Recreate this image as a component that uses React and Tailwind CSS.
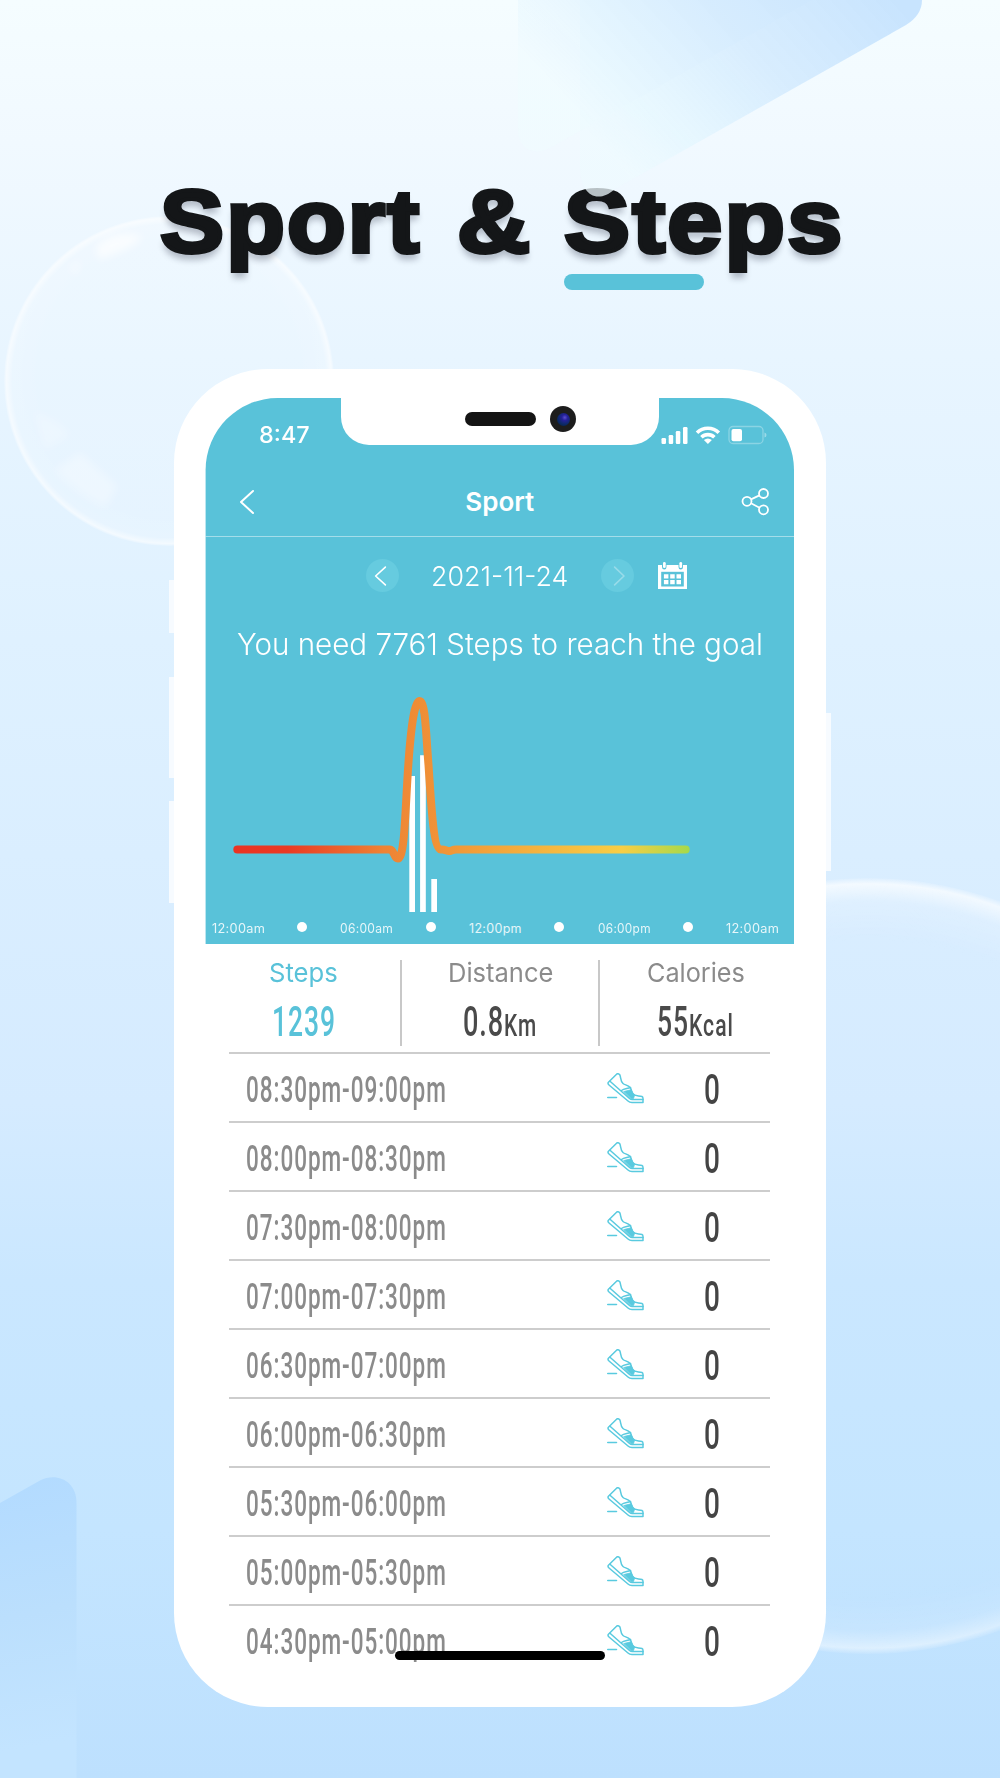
import { useLayoutEffect, useRef } from "react";

const SLOTS = [
  "08:30pm-09:00pm",
  "08:00pm-08:30pm",
  "07:30pm-08:00pm",
  "07:00pm-07:30pm",
  "06:30pm-07:00pm",
  "06:00pm-06:30pm",
  "05:30pm-06:00pm",
  "05:00pm-05:30pm",
  "04:30pm-05:00pm",
];

const AXIS = ["12:00am", null, "06:00am", null, "12:00pm", null, "06:00pm", null, "12:00am"];

// Condenses or widens a run of text so that it fills exactly `w` pixels.
function Fit({ w, className = "", children }) {
  const ref = useRef(null);
  useLayoutEffect(() => {
    const el = ref.current;
    const apply = () => {
      el.style.transform = `scaleX(${w / el.offsetWidth})`;
    };
    apply();
    document.fonts?.ready.then(apply);
  }, [w]);
  return (
    <span className="inline-block shrink-0 text-left" style={{ width: w }}>
      <span ref={ref} className={`inline-block origin-left whitespace-nowrap ${className}`}>
        {children}
      </span>
    </span>
  );
}

function Backdrop() {
  return (
    <svg className="absolute inset-0" width="1000" height="1778" viewBox="0 0 1000 1778" fill="none">
      <defs>
        <linearGradient id="corner" x1="20" y1="1480" x2="70" y2="1740" gradientUnits="userSpaceOnUse">
          <stop stopColor="#b3dbff" />
          <stop offset="0.5" stopColor="#bbdffd" />
          <stop offset="1" stopColor="#c3e4ff" />
        </linearGradient>
        <radialGradient id="bubble">
          <stop offset="0.8" stopColor="#fff" stopOpacity="0.1" />
          <stop offset="0.95" stopColor="#fff" stopOpacity="0.18" />
          <stop offset="0.985" stopColor="#fff" stopOpacity="0.6" />
          <stop offset="1" stopColor="#fff" stopOpacity="0.15" />
        </radialGradient>
        <radialGradient id="orb">
          <stop offset="0.84" stopColor="#fff" stopOpacity="0" />
          <stop offset="0.94" stopColor="#fff" stopOpacity="0.18" />
          <stop offset="0.985" stopColor="#fff" stopOpacity="0.7" />
          <stop offset="1" stopColor="#fff" stopOpacity="0.1" />
        </radialGradient>
        <linearGradient id="orbFade" x1="0" y1="879" x2="0" y2="1654" gradientUnits="userSpaceOnUse">
          <stop stopColor="#fff" />
          <stop offset="0.35" stopColor="#fff" stopOpacity="0.15" />
          <stop offset="0.85" stopColor="#fff" stopOpacity="0.1" />
          <stop offset="1" stopColor="#fff" stopOpacity="0.7" />
        </linearGradient>
        <mask id="orbMask">
          <rect x="400" y="800" width="700" height="900" fill="url(#orbFade)" />
        </mask>
        <filter id="soft" x="-50%" y="-50%" width="200%" height="200%">
          <feGaussianBlur stdDeviation="4" />
        </filter>
      </defs>
      <circle cx="169" cy="381" r="165" fill="url(#bubble)" />
      <g fill="#fff" filter="url(#soft)">
        <path d="M96 246 Q116 228 142 236 Q140 246 98 260Z" opacity="0.65" />
        <path d="M68 268 L80 258 L78 276Z" opacity="0.4" />
        <path d="M54 470 L80 452 Q100 470 118 486 L106 508 Q76 494 54 470Z" opacity="0.3" />
        <path d="M34 410 L62 425 L70 436 L44 450Z" opacity="0.22" />
      </g>
      <circle cx="868" cy="1266" r="388" fill="url(#orb)" mask="url(#orbMask)" />
      <path d="M0 1503 L40 1480.500 C56 1472 76.500 1480 76.500 1503 V1778 H0Z" fill="url(#corner)" />
    </svg>
  );
}

function Ribbons() {
  return (
    <svg className="absolute top-0 left-[500px]" width="440" height="210" viewBox="500 0 440 210" fill="none">
      <defs>
        <linearGradient id="ribA" x1="880" y1="-20" x2="640" y2="190" gradientUnits="userSpaceOnUse">
          <stop stopColor="#c8e4fe" />
          <stop offset="0.45" stopColor="#d6ecfe" stopOpacity="0.95" />
          <stop offset="0.85" stopColor="#e8f8ff" stopOpacity="0.85" />
          <stop offset="1" stopColor="#eefaff" stopOpacity="0.75" />
        </linearGradient>
        <linearGradient id="ribB" x1="760" y1="-60" x2="580" y2="110" gradientUnits="userSpaceOnUse">
          <stop stopColor="#cae3fe" />
          <stop offset="1" stopColor="#effbff" stopOpacity="0.7" />
        </linearGradient>
      </defs>
      <path d="M518 0 V128 C518 150 534 156 550 148 L812 0Z" fill="url(#ribB)" />
      <path d="M580 0 V166 C580 195 597 205 615 189 L906 25 Q922 15 922 0Z" fill="url(#ribA)" />
    </svg>
  );
}

function Chevron({ flip = false, className = "" }) {
  return (
    <svg className={className} width="16" height="26" viewBox="0 0 16 26" fill="none" stroke="currentColor" strokeWidth="2" strokeLinecap="round" strokeLinejoin="round">
      <path d={flip ? "M2 2 L13.500 13 L2 24" : "M14 2 L2 13 L14 24"} />
    </svg>
  );
}

function StatusIcons() {
  return (
    <svg width="106" height="20" viewBox="661 425 106 20" fill="#fff">
      <rect x="661.500" y="438" width="4.500" height="6" rx="1.200" />
      <rect x="668.700" y="435" width="4.500" height="9" rx="1.200" />
      <rect x="675.800" y="431" width="4.500" height="13" rx="1.200" />
      <rect x="683" y="427" width="4.500" height="17" rx="1.200" />
      <g fill="none" stroke="#fff" strokeWidth="3.600">
        <path d="M697 432.800 A15.500 15.500 0 0 1 718.800 432.800" />
        <path d="M701.400 437.300 A9.300 9.300 0 0 1 714.400 437.300" />
      </g>
      <path d="M707.900 444 L703.900 440 Q707.900 437 711.900 440Z" />
      <rect x="729" y="426.500" width="34" height="17" rx="4" fill="none" stroke="#fff" strokeOpacity="0.3" strokeWidth="1.300" />
      <rect x="731.500" y="429" width="10.500" height="12.200" rx="2" />
      <path d="M764.500 432.500 Q766.500 433 766.500 435 Q766.500 437 764.500 437.500Z" fillOpacity="0.4" />
    </svg>
  );
}

function ShareIcon() {
  return (
    <svg width="28" height="28" viewBox="741 487.500 28 28" fill="none" stroke="#fff" strokeWidth="1.800">
      <circle cx="747" cy="500.800" r="4.500" />
      <circle cx="763.500" cy="493" r="4.500" />
      <circle cx="763.500" cy="509.300" r="4.500" />
      <path d="M751 498.900 L759.400 494.900 M751 502.800 L759.500 507.200" />
    </svg>
  );
}

function CalendarIcon() {
  return (
    <svg width="29" height="27" viewBox="0 0 29 27">
      <path d="M0 3 H4 V5 Q4 7.500 6.300 7.500 Q8.500 7.500 8.500 5 V3 H20.500 V5 Q20.500 7.500 22.700 7.500 Q25 7.500 25 5 V3 H29 V27 H0Z" fill="#fff" />
      <rect x="5" y="0" width="2.700" height="6" rx="1.300" fill="#fff" />
      <rect x="21.400" y="0" width="2.700" height="6" rx="1.300" fill="#fff" />
      <rect x="3.200" y="9.800" width="22.600" height="14.700" fill="#59c2d9" />
      <path d="M5.900 12.200h4.500v4.300h-4.500z M12.200 12.200h4.500v4.300h-4.500z M18.500 12.200h4.500v4.300h-4.500z M5.900 18h4.500v4.300h-4.500z M12.200 18h4.500v4.300h-4.500z M18.500 18h4.500v4.300h-4.500z" fill="#fff" />
    </svg>
  );
}

function ShoeIcon() {
  return (
    <svg width="37" height="31" viewBox="0 0 37 31" fill="none" stroke="#59cadf" strokeWidth="1.500" strokeLinejoin="round" strokeLinecap="round">
      <path d="M1.200 9.500 L9.800 1 Q11.500 0.200 12.800 1.800 C14 4 13.200 8 16 10.500 C18 12.300 20.500 11.500 23.500 14.800 L25.500 20.500 C28 23.500 31 22.500 35 23.500 Q36.200 24 36 26.500 V29.500 H25 Q22.500 29.500 21 28 L2 12 Q0.600 10.800 1.200 9.500Z" />
      <path d="M3 8.200 L22.500 25.500 Q24 26.800 26 26.500 H36" />
      <path d="M14.500 17.500 C17 15.500 20 15.800 23.500 14.500" />
      <path d="M17 18.500 L24 16.800 L27.500 22.500 L26.500 25.500 L24 25.500Z" fill="#59cadf" strokeWidth="0.800" />
      <path d="M0.700 24.500 H9.500" />
    </svg>
  );
}

function PulseChart() {
  return (
    <svg className="block" width="588" height="240" viewBox="205 673 588 240" fill="none">
      <defs>
        <linearGradient id="pulse" x1="233" y1="0" x2="690" y2="0" gradientUnits="userSpaceOnUse">
          <stop stopColor="#ea3323" />
          <stop offset="0.12" stopColor="#ea3a24" />
          <stop offset="0.33" stopColor="#ee8334" />
          <stop offset="0.45" stopColor="#f09337" />
          <stop offset="0.85" stopColor="#f8ce46" />
          <stop offset="1" stopColor="#a5d94b" />
        </linearGradient>
      </defs>
      <path d="M409.300 776 h5.700 V912 h-5.700z M420.100 755.300 h5.700 V912 h-5.700z M431.300 879 h5.700 V912 h-5.700z" fill="#fff" />
      <path
        d="M237.300 849.600 H390 C394 849.600 394 858.500 397.800 858.500 C406 858.500 405 795 410 744 C412 722 415 701 419.500 701 C425.500 701 426 735 428.500 765 C431 800 433 849 441 849.600 C445 849 446 851 449.500 851 C452 851 452 849.600 456 849.600 H685.700"
        stroke="url(#pulse)"
        strokeWidth="8"
        strokeLinecap="round"
        strokeLinejoin="round"
      />
    </svg>
  );
}

export default function App() {
  return (
    <div className="relative flex h-[1778px] w-[1000px] flex-col overflow-hidden bg-[linear-gradient(180deg,#f5fdff_0%,#f1f9ff_8%,#e8f5ff_20%,#dff1ff_36%,#daeeff_48%,#d5ebff_62%,#cae7ff_72%,#c4e5ff_86%,#bde0fe_100%)] font-['Inter',sans-serif]">
      <Backdrop />

      <header className="relative h-[369px] shrink-0">
        <h1 className="flex pt-[177px] pl-[160px] font-['Liberation_Sans',sans-serif] text-[89px] leading-[89px] font-bold text-[#141618] [-webkit-text-stroke:4px_#141618] [text-shadow:0_7px_6px_rgba(20,30,50,0.28)]">
          <Fit w={261} className="tracking-[2px]">Sport</Fit>
          <span className="w-[36px]" />
          <Fit w={73}>&amp;</Fit>
          <span className="w-[33.5px]" />
          <Fit w={280} className="tracking-[2px]">Steps</Fit>
        </h1>
        <div className="mt-[8px] ml-[563.5px] h-4 w-[140px] rounded-full bg-[#59c2d9]" />
        <Ribbons />
      </header>

      <main className="relative ml-[174px] h-[1338px] w-[652px] rounded-[94px] bg-white pt-[29px] pr-[32px] pl-[31px]">
        <div className="absolute top-[211px] -left-[5px] h-[53px] w-[5px] bg-[#f7fbff]" />
        <div className="absolute top-[308px] -left-[5px] h-[101px] w-[5px] bg-[#f7fbff]" />
        <div className="absolute top-[432px] -left-[5px] h-[102px] w-[5px] bg-[#f7fbff]" />
        <div className="absolute top-[344px] -right-[4.5px] h-[158px] w-[4.5px] bg-[#f7fbff]" />

        <section className="relative h-[546px] bg-[#59c2d9] text-white [clip-path:inset(0_0_0_0.6px_round_72px_72px_0_0)]">
          <div className="absolute top-0 left-[136px] flex h-[47px] w-[318px] rounded-b-[28px] bg-white">
            <div className="mt-[14px] ml-[123.5px] h-[14px] w-[71px] rounded-full bg-[#141414]" />
            <div className="mt-[8px] ml-[14.5px] flex size-[26px] items-center justify-center rounded-full bg-[#1d1d1d]">
              <div className="size-[13px] rounded-full bg-[radial-gradient(circle_at_60%_35%,#5a4fd0_0%,#25209a_25%,#0b2a66_60%,#0a1a38_100%)]" />
            </div>
          </div>

          <div className="flex h-[74px] items-center justify-between pr-[27px] pl-[54px]">
            <Fit w={51} className="pt-[3px] text-[23px] leading-[23px] font-medium">8:47</Fit>
            <StatusIcons />
          </div>

          <nav className="flex h-[65px] items-center justify-between border-b-[1.5px] border-white/45 pr-[25px] pb-[5px] pl-[33.5px]">
            <Chevron />
            <Fit w={69} className="ml-[2px] pt-[3px] text-[26px] leading-[26px] font-semibold">Sport</Fit>
            <ShareIcon />
          </nav>

          <div className="flex h-[77px] items-center pl-[160.5px]">
            <div className="flex size-[33px] items-center justify-center rounded-full bg-[#66cbdf]">
              <Chevron className="mr-[3px] h-[22px] w-[13px]" />
            </div>
            <div className="w-[32px]" />
            <Fit w={137} className="pt-[3px] text-[27px] leading-[27px] font-[350]">2021-11-24</Fit>
            <div className="ml-[33.5px] flex size-[33px] items-center justify-center rounded-full bg-[#66cbdf] text-[#98dbe9]">
              <Chevron flip className="ml-[3px] h-[22px] w-[13px]" />
            </div>
            <div className="ml-[23.500px]">
              <CalendarIcon />
            </div>
          </div>

          <div className="flex h-[59px] items-center pl-[31.5px]">
            <Fit w={526} className="pt-[2px] text-[30px] leading-[30px] font-[350]">You need 7761 Steps to reach the goal</Fit>
          </div>

          <PulseChart />

          <div className="grid h-[28px] w-[579px] grid-cols-9 items-center justify-items-center">
            {AXIS.map((label, i) =>
              label ? (
                <Fit key={i} w={53} className="ml-px text-[12.5px] leading-[13px] tracking-wide text-white/85">{label}</Fit>
              ) : (
                <span key={i} className="ml-px size-[10px] rounded-full bg-white" />
              )
            )}
          </div>
        </section>

        <section className="grid h-[108px] grid-cols-[197px_198px_1fr] pt-[15.5px] text-[26px] leading-[26px] text-[#8b8b8b]">
          <div className="flex h-[86px] flex-col items-center border-r-2 border-[#c8c8c8] pl-[2px] text-[#59c2d9]">
            <Fit w={69}>Steps</Fit>
            <Fit w={64} className="mt-[14px] font-['Roboto'] text-[43px] leading-[43px] font-medium tracking-[1.5px]">1239</Fit>
          </div>
          <div className="flex h-[86px] flex-col items-center border-r-2 border-[#c8c8c8]">
            <Fit w={105}>Distance</Fit>
            <div className="mt-[14px] flex items-baseline font-['Roboto'] text-[43px] leading-[43px] font-medium tracking-[1.5px] text-[#4a4a4a]">
              <Fit w={41}>0.8</Fit>
              <Fit w={33} className="text-[31px]">Km</Fit>
            </div>
          </div>
          <div className="flex h-[86px] flex-col items-center pr-[3px]">
            <Fit w={98}>Calories</Fit>
            <div className="mt-[14px] flex items-baseline font-['Roboto'] text-[43px] leading-[43px] font-medium tracking-[1.5px] text-[#4a4a4a]">
              <Fit w={32}>55</Fit>
              <Fit w={45} className="text-[31px]">Kcal</Fit>
            </div>
          </div>
        </section>

        <ul className="mx-[24px] font-['Roboto']">
          {SLOTS.map((slot) => (
            <li key={slot} className="flex h-[69px] items-center border-t-2 border-[#cdcdcd] pt-[4px] pl-[17px]">
              <Fit w={201} className="pt-[2px] text-[36px] leading-[36px] font-medium tracking-[1.5px] text-[#8b8b8b]">{slot}</Fit>
              <div className="-mt-[2px] ml-[159.5px]">
                <ShoeIcon />
              </div>
              <Fit w={16} className="ml-[60.5px] text-[42px] leading-[42px] font-medium text-[#444]">0</Fit>
            </li>
          ))}
        </ul>

        <div className="absolute top-[1282px] left-[221px] h-[8.5px] w-[210px] rounded-full bg-black" />
      </main>
    </div>
  );
}
